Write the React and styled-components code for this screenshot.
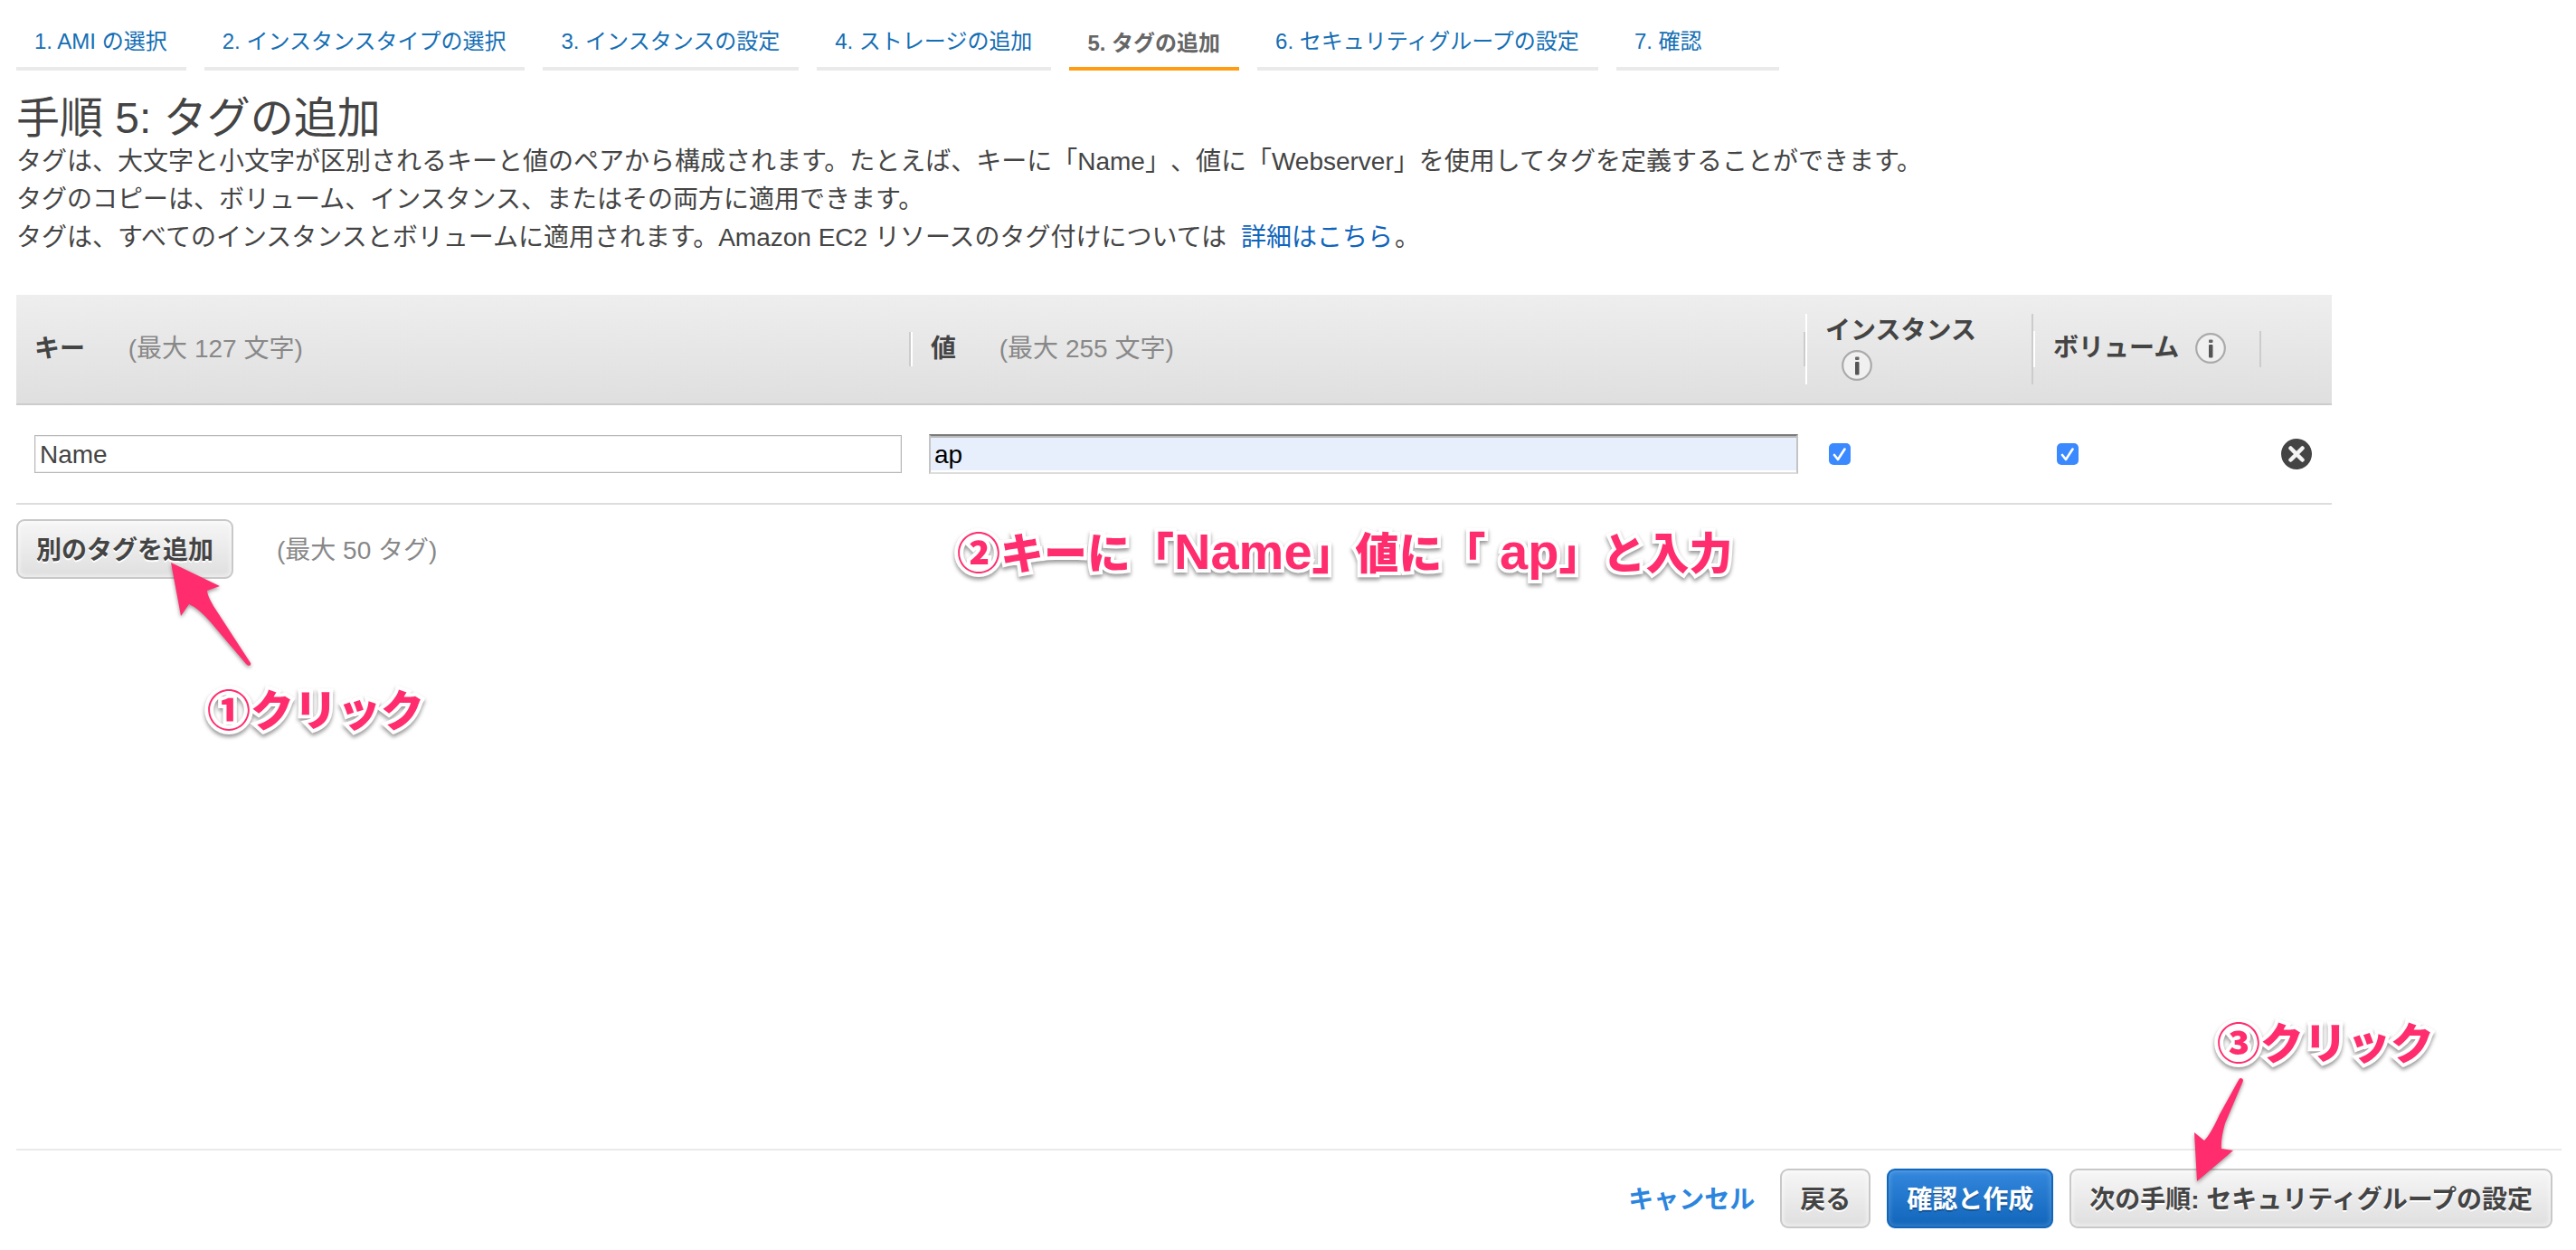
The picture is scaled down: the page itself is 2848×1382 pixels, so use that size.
import React, { useState } from "react";
import styled, { createGlobalStyle, css } from "styled-components";

const GlobalStyle = createGlobalStyle`
  * { box-sizing: border-box; }
  html, body, #root { height: 100%; }
  body {
    margin: 0;
    background: #fff;
    color: #444;
    font-family: "Liberation Sans", "Noto Sans CJK JP", sans-serif;
    font-size: 28px;
    line-height: 42px;
    text-spacing-trim: space-all;
  }
  input, button { font: inherit; color: inherit; }
`;

const Page = styled.div`
  position: relative;
  display: flex;
  flex-direction: column;
  min-height: 100vh;
  padding: 0 16px 24px 18px;
`;

const Steps = styled.nav`
  display: flex;
  flex-wrap: wrap;
  gap: 20px;
  height: 78px;
  font-size: 24px;
`;

const Step = styled.a`
  display: flex;
  align-items: center;
  min-width: ${(p) => (p.$wide ? "180px" : "0")};
  padding: ${(p) => (p.$active ? "22px" : "18px")} 21px 0 20px;
  border-bottom: 4px solid ${(p) => (p.$active ? "#ff9c12" : "#eaeaea")};
  color: ${(p) => (p.$active ? "#666" : "#146eb4")};
  font-weight: ${(p) => (p.$active ? 700 : 400)};
  text-decoration: none;
  white-space: nowrap;
`;

const Title = styled.h1`
  margin: 26px 0 0;
  font-size: 48px;
  font-weight: 400;
  line-height: 54px;
`;

const Lead = styled.p`
  margin: 0;
`;

const MoreLink = styled.a`
  margin: 0 2px 0 8px;
  color: #0f64bc;
  text-decoration: none;
`;

const TagTable = styled.table`
  width: calc(100% - 254px);
  margin-top: 42px;
  border-collapse: separate;
  border-spacing: 0;
  table-layout: fixed;
`;

const HeadCell = styled.th`
  width: ${(p) => p.$width};
  height: 122px;
  padding: 0;
  border-bottom: 2px solid #ccc;
  background: linear-gradient(#eee, #dfdfdf);
  text-align: left;
  vertical-align: middle;
`;

const HeadInner = styled.div`
  min-height: 38px;
  padding: 0 18px 0 20px;
  line-height: 38px;
  border-left: ${(p) => (p.$first ? "0" : "2px solid #fff")};
  border-right: 2px solid #ccc;
`;

const Limit = styled.span`
  margin-left: ${(p) => p.$gap || "40px"};
  padding-top: 4px;
  color: #888;
  font-weight: 400;
`;

const InfoButton = styled.button`
  display: inline-block;
  width: 34px;
  height: 34px;
  margin: 0 0 4px 18px;
  padding: 0;
  border: 0;
  background: none;
  vertical-align: middle;
  svg { display: block; }
`;

const Cell = styled.td`
  height: 110px;
  padding: 0 ${(p) => p.$right || "8px"} 0 ${(p) => p.$left || "20px"};
  border-bottom: 2px solid #ddd;
  vertical-align: middle;
`;

const TextInput = styled.input`
  display: block;
  width: 100%;
  height: 42px;
  padding: 2px 5px 0;
  border: 1px solid #b8b8b8;
  border-radius: 0;
  background: #fff;
  box-shadow: inset 0 0 0 1px #eee;
  outline: 0;
  ${(p) =>
    p.$filled &&
    css`
      height: 44px;
      padding: 2px 4px 0;
      border: 2px solid;
      border-color: #7b7b7b #c4c4c4 #ddd #c4c4c4;
      background: #e8effc;
      box-shadow: inset 0 2px #bbb, inset 0 -2px #fff;
      color: #000;
    `}
`;

const CheckBox = styled.input`
  appearance: none;
  display: block;
  width: 24px;
  height: 24px;
  margin: 0;
  border-radius: 5px;
  border: 1px solid #aaa;
  &:checked {
    border: 0;
    background: #3b89ff
      url("data:image/svg+xml,%3Csvg xmlns='http://www.w3.org/2000/svg' viewBox='0 0 24 24'%3E%3Cpath d='M6 13l4 5L17.500 6.500' fill='none' stroke='white' stroke-width='2.600' stroke-linecap='round' stroke-linejoin='round'/%3E%3C/svg%3E");
  }
`;

const RemoveButton = styled.button`
  display: block;
  width: 34px;
  height: 34px;
  padding: 0;
  border: 0;
  background: none;
  svg { display: block; }
`;

const AddRow = styled.div`
  display: flex;
  align-items: center;
  margin-top: 16px;
`;

const Button = styled.button`
  height: 66px;
  padding: 4px 20px 0;
  border: 2px solid #c8c8c8;
  border-radius: 9px;
  background: linear-gradient(#f6f6f6, #dfdfdf);
  box-shadow: inset 0 0 4px 2px rgba(255, 255, 255, 0.5);
  color: #444;
  font-weight: 700;
  text-shadow: 0 2px #fff;
  white-space: nowrap;
  ${(p) =>
    p.$primary &&
    css`
      border-color: #1166bb;
      background: linear-gradient(#3388dd, #1166bb);
      box-shadow: inset 0 0 4px 2px rgba(255, 255, 255, 0.16);
      color: #fff;
      text-shadow: 0 2px rgba(0, 0, 0, 0.25);
    `}
`;

const Footer = styled.footer`
  display: flex;
  justify-content: flex-end;
  align-items: center;
  gap: 18px;
  margin-top: auto;
  padding: 20px 10px 0 0;
  border-top: 2px solid #eaeaea;
`;

const CancelLink = styled.a`
  margin-right: 10px;
  padding-top: 4px;
  color: #2b85de;
  font-weight: 700;
  text-decoration: none;
`;

const Note = styled.div`
  position: absolute;
  left: ${(p) => p.$x}px;
  top: ${(p) => p.$y}px;
  color: #ff2d6e;
  font-family: "Noto Sans CJK JP", sans-serif;
  font-size: 48px;
  font-weight: 900;
  line-height: 64px;
  white-space: pre;
  paint-order: stroke fill;
  -webkit-text-stroke: 8px #fff;
  filter: drop-shadow(0 3px 2px rgba(0, 0, 0, 0.4));
  pointer-events: none;
`;

const Latin = styled.span`
  font-family: "Liberation Sans", sans-serif;
  font-size: 56px;
`;

const Arrow = styled.svg`
  position: absolute;
  left: ${(p) => p.$x}px;
  top: ${(p) => p.$y}px;
  overflow: visible;
  fill: #ff2d6e;
  filter: drop-shadow(0 2px 2px rgba(0, 0, 0, 0.4));
  pointer-events: none;
`;

const InfoIcon = () => (
  <svg width="34" height="34" viewBox="0 0 34 34" aria-hidden="true">
    <circle cx="17" cy="17" r="15.800" fill="#f0f0f0" stroke="#aaa" strokeWidth="2.200" />
    <rect x="15" y="7.500" width="4.500" height="3.500" rx="1" fill="#666" />
    <rect x="15" y="13" width="4.500" height="14.500" rx="1" fill="#555" />
  </svg>
);

const RemoveIcon = () => (
  <svg width="34" height="34" viewBox="0 0 34 34" aria-hidden="true">
    <circle cx="17" cy="17" r="17" fill="#444" />
    <path d="M10.500 10.500l13 13M23.500 10.500l-13 13" stroke="#f4f4f4" strokeWidth="4.500" strokeLinecap="round" />
  </svg>
);

const steps = [
  "1. AMI の選択",
  "2. インスタンスタイプの選択",
  "3. インスタンスの設定",
  "4. ストレージの追加",
  "5. タグの追加",
  "6. セキュリティグループの設定",
  "7. 確認",
];

function TagRow() {
  const [key, setKey] = useState("Name");
  const [value, setValue] = useState("ap");
  return (
    <tr>
      <Cell $right="10px">
        <TextInput aria-label="キー" value={key} onChange={(e) => setKey(e.target.value)} />
      </Cell>
      <Cell>
        <TextInput $filled aria-label="値" value={value} onChange={(e) => setValue(e.target.value)} />
      </Cell>
      <Cell $left="26px">
        <CheckBox type="checkbox" aria-label="インスタンス" defaultChecked />
      </Cell>
      <Cell $left="26px">
        <CheckBox type="checkbox" aria-label="ボリューム" defaultChecked />
      </Cell>
      <Cell $left="22px">
        <RemoveButton type="button" aria-label="削除">
          <RemoveIcon />
        </RemoveButton>
      </Cell>
    </tr>
  );
}

export default function App() {
  return (
    <>
      <GlobalStyle />
      <Page>
        <Steps>
          {steps.map((label, i) => (
            <Step key={label} href="#" $active={i === 4} $wide={i === 6}>
              {label}
            </Step>
          ))}
        </Steps>

        <Title>手順 5: タグの追加</Title>
        <Lead>
          タグは、大文字と小文字が区別されるキーと値のペアから構成されます。たとえば、キーに「Name」、値に「Webserver」を使用してタグを定義することができます。
        </Lead>
        <Lead>タグのコピーは、ボリューム、インスタンス、またはその両方に適用できます。</Lead>
        <Lead>
          タグは、すべてのインスタンスとボリュームに適用されます。Amazon EC2 リソースのタグ付けについては{" "}
          <MoreLink href="#">詳細はこちら</MoreLink>。
        </Lead>

        <TagTable>
          <thead>
            <tr>
              <HeadCell>
                <HeadInner $first>
                  キー <Limit>(最大 127 文字)</Limit>
                </HeadInner>
              </HeadCell>
              <HeadCell>
                <HeadInner>
                  値 <Limit>(最大 255 文字)</Limit>
                </HeadInner>
              </HeadCell>
              <HeadCell $width="252px">
                <HeadInner>
                  インスタンス
                  <InfoButton type="button" aria-label="情報">
                    <InfoIcon />
                  </InfoButton>
                </HeadInner>
              </HeadCell>
              <HeadCell $width="252px">
                <HeadInner>
                  ボリューム
                  <InfoButton type="button" aria-label="情報">
                    <InfoIcon />
                  </InfoButton>
                </HeadInner>
              </HeadCell>
              <HeadCell $width="78px" />
            </tr>
          </thead>
          <tbody>
            <TagRow />
          </tbody>
        </TagTable>

        <AddRow>
          <Button type="button">別のタグを追加</Button>
          <Limit $gap="48px">(最大 50 タグ)</Limit>
        </AddRow>

        <Footer>
          <CancelLink href="#">キャンセル</CancelLink>
          <Button type="button">戻る</Button>
          <Button type="button" $primary>確認と作成</Button>
          <Button type="button">次の手順: セキュリティグループの設定</Button>
        </Footer>

        <Arrow $x={189} $y={622} width="90" height="114" viewBox="0 0 90 114">
          <path d="M0 0L54 26L40 31Q40 36 47 48L88 111Q89 114 86 114Q85 114 83 112L44 66Q30 50 20 46L11 59Z" />
        </Arrow>
        <Note $x={229} $y={750}>①クリック</Note>
        <Note $x={1058} $y={576}>
          ②キーに「<Latin>Name</Latin>」値に「<Latin> ap</Latin>」と入力
        </Note>
        <Note $x={2451} $y={1118}>③クリック</Note>
        <Arrow $x={2426} $y={1192} width="54" height="114" viewBox="0 0 54 114">
          <path d="M3 114L43 80L30 78Q29 68 34 50L54 3Q54 0 51 0Q50 0 49 2L28 40Q18 62 11 69L0 60Z" />
        </Arrow>
      </Page>
    </>
  );
}
